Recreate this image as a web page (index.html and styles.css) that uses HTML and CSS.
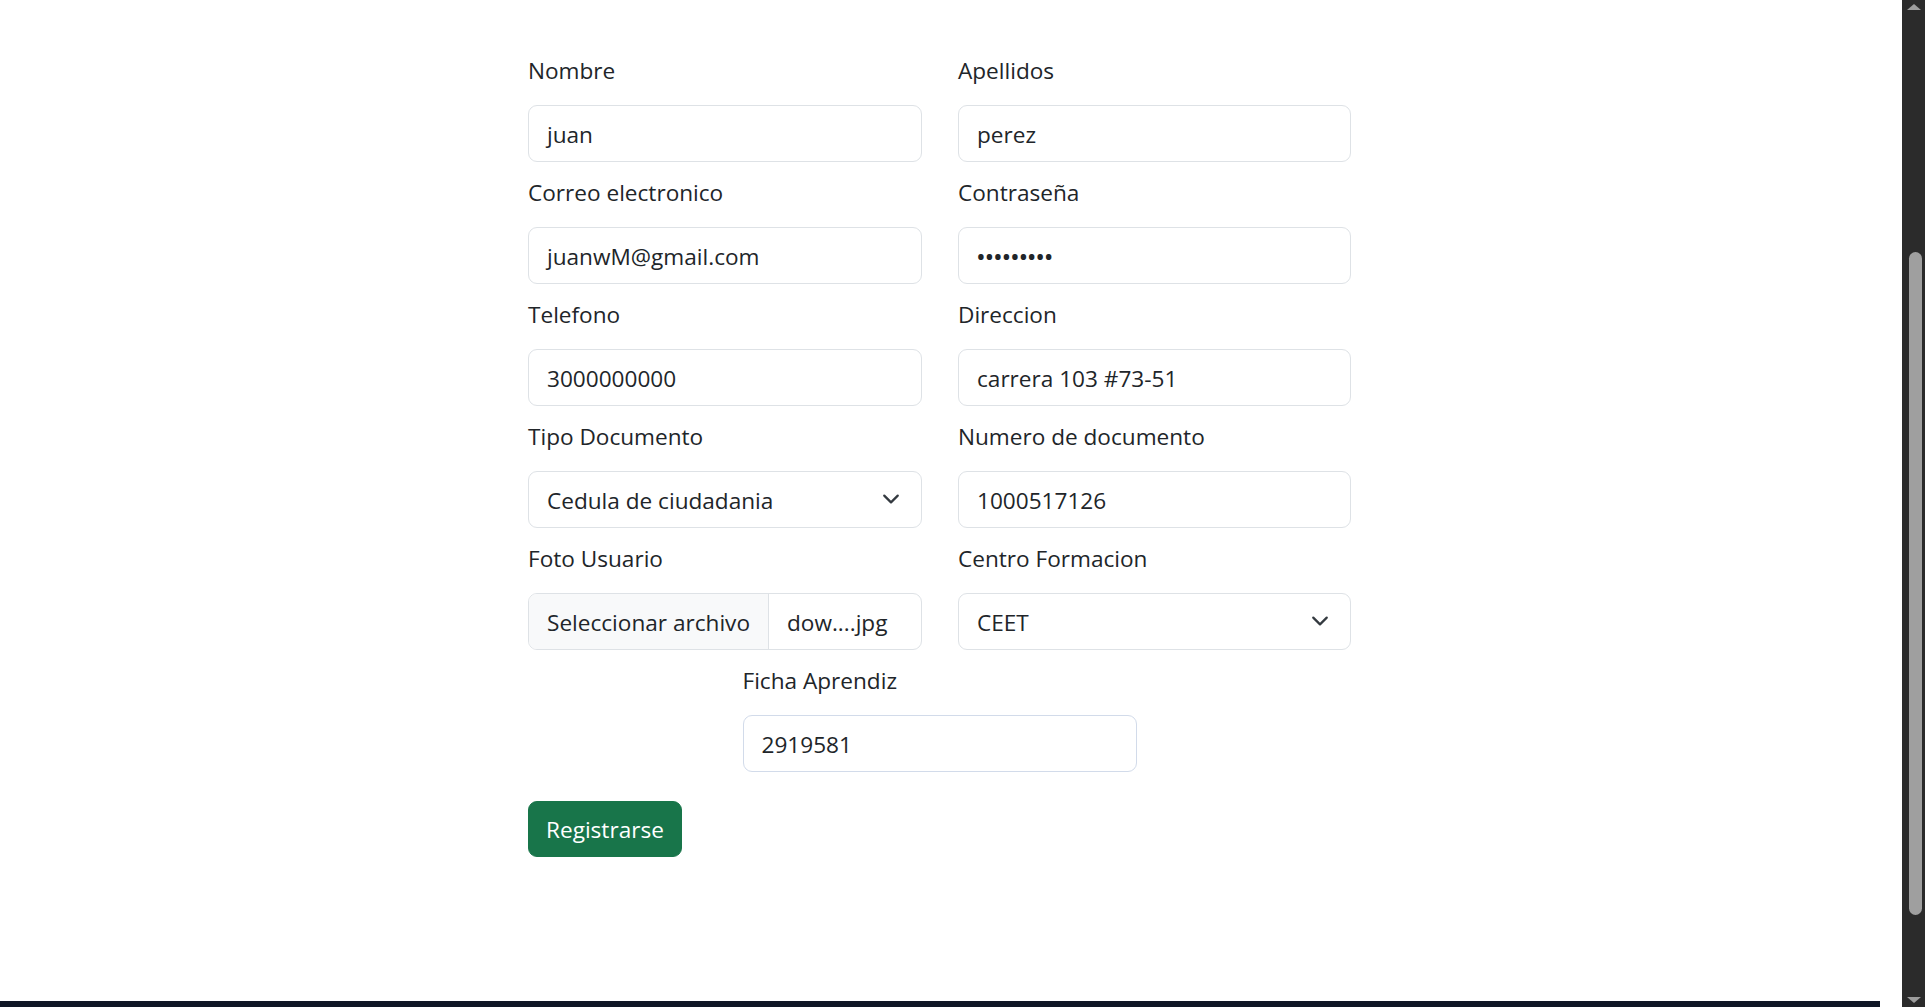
FILE: index.html
```html
<!DOCTYPE html>
<html lang="es">
<head>
<meta charset="utf-8">
<title>Registro</title>
<link rel="stylesheet" href="styles.css">
</head>
<body>
<div class="page">
  <main class="main">
    <div class="content">
      <form class="form">
        <div class="field">
          <label class="label">Nombre</label>
          <div class="control">juan</div>
        </div>
        <div class="field">
          <label class="label">Apellidos</label>
          <div class="control">perez</div>
        </div>
        <div class="field">
          <label class="label">Correo electronico</label>
          <div class="control">juanwM@gmail.com</div>
        </div>
        <div class="field">
          <label class="label">Contraseña</label>
          <div class="control password">•••••••••</div>
        </div>
        <div class="field">
          <label class="label">Telefono</label>
          <div class="control">3000000000</div>
        </div>
        <div class="field">
          <label class="label">Direccion</label>
          <div class="control">carrera 103 #73-51</div>
        </div>
        <div class="field">
          <label class="label">Tipo Documento</label>
          <div class="control select">
            <span>Cedula de ciudadania</span>
            <svg class="chev" viewBox="0 0 16 16" width="24" height="18"><path d="m2 5 6 6 6-6" fill="none" stroke="#343a40" stroke-width="2" stroke-linecap="round" stroke-linejoin="round"/></svg>
          </div>
        </div>
        <div class="field">
          <label class="label">Numero de documento</label>
          <div class="control">1000517126</div>
        </div>
        <div class="field">
          <label class="label">Foto Usuario</label>
          <div class="control file">
            <span class="file-btn">Seleccionar archivo</span>
            <span class="file-name">dow....jpg</span>
          </div>
        </div>
        <div class="field">
          <label class="label">Centro Formacion</label>
          <div class="control select">
            <span>CEET</span>
            <svg class="chev" viewBox="0 0 16 16" width="24" height="18"><path d="m2 5 6 6 6-6" fill="none" stroke="#343a40" stroke-width="2" stroke-linecap="round" stroke-linejoin="round"/></svg>
          </div>
        </div>
        <div class="field field-center">
          <label class="label">Ficha Aprendiz</label>
          <div class="control ficha">2919581</div>
        </div>
        <div class="actions">
          <button type="button" class="btn">Registrarse</button>
        </div>
      </form>
    </div>
    <div class="footer-strip"></div>
  </main>
  <aside class="scrollbar">
    <svg class="arrow" viewBox="0 0 16 8" width="16" height="8"><path d="M1 7 L8 1 L15 7 Z" fill="#9d9d9d"/></svg>
    <div class="thumb"></div>
    <svg class="arrow arrow-down" viewBox="0 0 16 8" width="16" height="8"><path d="M1 1 L8 7 L15 1 Z" fill="#9d9d9d"/></svg>
  </aside>
</div>
</body>
</html>
```

FILE: styles.css
```css
* { box-sizing: border-box; }
html, body { margin: 0; padding: 0; }
body {
  font-family: "Open Sans", "Noto Sans", sans-serif;
  font-size: 22.6px;
  color: #212529;
  background: #ffffff;
}
.page {
  display: flex;
  height: 1007px;
  overflow: hidden;
}
.main {
  flex: 1;
  display: flex;
  flex-direction: column;
  min-width: 0;
}
.content {
  flex: 1;
  padding: 53px 0 0 528px;
}
.form {
  display: grid;
  grid-template-columns: 394px 393px;
  column-gap: 36px;
  width: 823px;
}
.field {
  display: flex;
  flex-direction: column;
  margin-bottom: 13px;
}
.field-center {
  grid-column: 1 / -1;
  justify-self: center;
  width: 394px;
}
.label {
  line-height: 36px;
  margin-bottom: 16px;
}
.control {
  height: 57px;
  border: 1px solid #dee2e6;
  border-radius: 9px;
  padding: 2px 18px 0;
  line-height: 53px;
  background: #fff;
  white-space: nowrap;
  overflow: hidden;
}
.password {
  letter-spacing: -1.3px;
  font-size: 26px;
  padding-left: 17px;
}
.select {
  display: flex;
  align-items: center;
  justify-content: space-between;
}
.chev { display: block; flex: none; margin-top: -3px; }
.file {
  display: flex;
  padding: 0;
}
.file-btn,
.file-name {
  padding-top: 2px;
  line-height: 53px;
}
.file-btn {
  background: #f8f9fa;
  border-right: 1px solid #dee2e6;
  padding-left: 18px;
  padding-right: 18px;
  margin-right: 18px;
}
.ficha {
  border-color: #d2dbea;
}
.actions {
  grid-column: 1 / -1;
  margin-top: 16px;
}
.btn {
  font-family: inherit;
  font-size: 22.6px;
  color: #fff;
  background: #18754a;
  border: 1px solid #18754a;
  border-radius: 9px;
  height: 56px;
  padding: 1px 17px 0;
  line-height: 53px;
  cursor: pointer;
}
.footer-strip {
  height: 6px;
  margin-right: 22px;
  background: #0f1626;
}
.scrollbar {
  width: 23px;
  flex: none;
  background: #2b2b2b;
  display: flex;
  flex-direction: column;
  align-items: center;
  padding: 3px 0 3px;
}
.arrow { display: block; }
.thumb {
  width: 13px;
  height: 663px;
  margin-top: 241px;
  margin-left: 4px;
  border-radius: 7px;
  background: #9f9f9f;
}
.arrow-down { margin-top: auto; }
```
